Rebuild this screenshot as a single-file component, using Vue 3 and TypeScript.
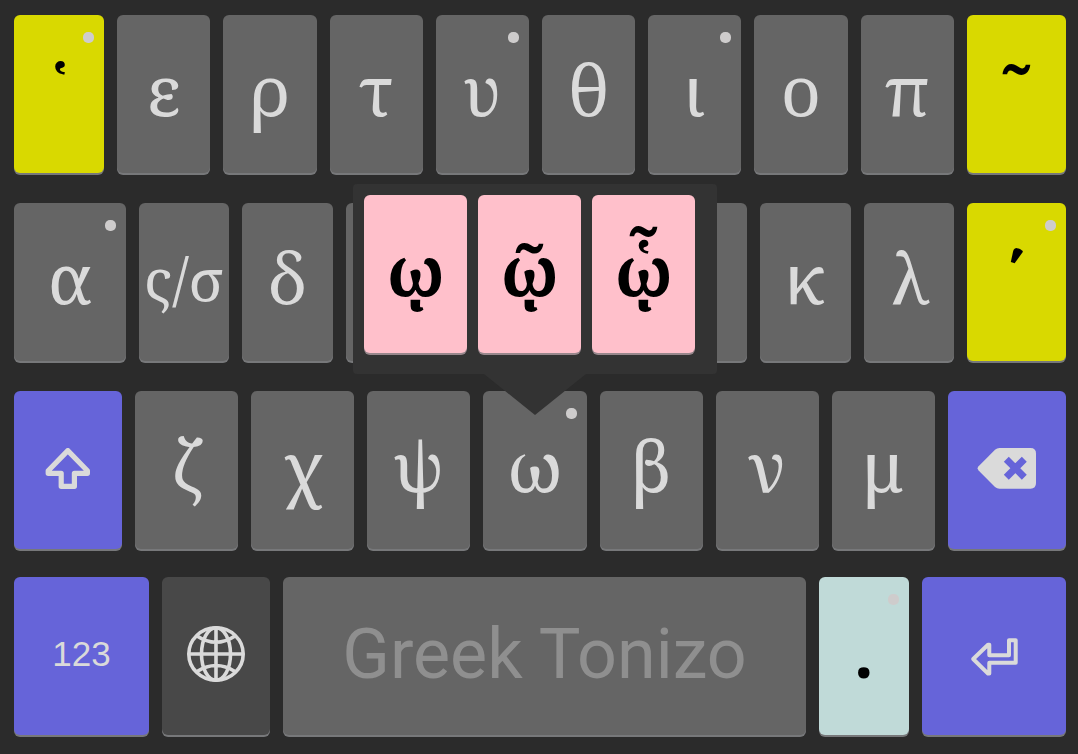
<script setup lang="ts">
type Tone = 'plain' | 'accent' | 'control' | 'dark' | 'mint'
type Icon = 'shift' | 'backspace' | 'globe' | 'enter'

interface Key {
  label?: string
  name?: string
  icon?: Icon
  weight: number
  tone?: Tone
  text?: 'pair' | 'digits' | 'space' | 'bold'
  more?: boolean
  popup?: string[]
}

const letterRows: Key[][] = [
  [
    { label: '῾', name: 'Rough breathing', weight: 90, tone: 'accent', text: 'bold', more: true },
    { label: 'ε', weight: 93 },
    { label: 'ρ', weight: 93 },
    { label: 'τ', weight: 93 },
    { label: 'υ', weight: 93, more: true },
    { label: 'θ', weight: 93 },
    { label: 'ι', weight: 93, more: true },
    { label: 'ο', weight: 93 },
    { label: 'π', weight: 93 },
    { label: '῀', name: 'Circumflex', weight: 99, tone: 'accent', text: 'bold' },
  ],
  [
    { label: 'α', weight: 112, more: true },
    { label: 'ς/σ', weight: 91, text: 'pair' },
    { label: 'δ', weight: 91 },
    { name: 'Phi', weight: 91 },
    { name: 'Gamma', weight: 91 },
    { name: 'Eta', weight: 91 },
    { name: 'Xi', weight: 91 },
    { label: 'κ', weight: 91 },
    { label: 'λ', weight: 91 },
    { label: '΄', name: 'Acute', weight: 99, tone: 'accent', text: 'bold', more: true },
  ],
  [
    { icon: 'shift', name: 'Shift', weight: 108, tone: 'control' },
    { label: 'ζ', weight: 103 },
    { label: 'χ', weight: 103 },
    { label: 'ψ', weight: 103 },
    { label: 'ω', weight: 103, more: true, popup: ['ῳ', 'ῷ', 'ᾧ'] },
    { label: 'β', weight: 103 },
    { label: 'ν', weight: 103 },
    { label: 'μ', weight: 103 },
    { icon: 'backspace', name: 'Backspace', weight: 118, tone: 'control' },
  ],
]

const bottomRow: Key[] = [
  { label: '123', weight: 135, tone: 'control', text: 'digits' },
  { icon: 'globe', name: 'Change keyboard', weight: 108, tone: 'dark' },
  { label: 'Greek Tonizo', weight: 522, text: 'space' },
  { label: '.', name: 'Full stop', weight: 90, tone: 'mint', text: 'bold', more: true },
  { icon: 'enter', name: 'Enter', weight: 144, tone: 'control' },
]

const blocks = [letterRows, [bottomRow]]
</script>

<template>
  <main class="keyboard">
    <section v-for="(block, b) in blocks" :key="b" class="block">
      <div v-for="(row, r) in block" :key="r" class="row">
        <div v-for="(key, k) in row" :key="k" class="slot" :style="{ flexGrow: key.weight }">
          <button type="button" class="key" :class="[key.tone, key.text]" :aria-label="key.name">
            <span v-if="key.label" class="glyph">{{ key.label }}</span>
            <svg v-else-if="key.icon === 'shift'" class="icon" width="48" height="44" viewBox="44 448 48 44">
              <path d="M67.8 450.6 48.2 470.8V473.3H61.2V486.3H74.4V473.3H87.4V470.8Z" fill="none" stroke="currentColor" stroke-width="5.2" stroke-linejoin="round" />
            </svg>
            <svg v-else-if="key.icon === 'backspace'" class="icon" width="60" height="44" viewBox="977 448 60 44">
              <path d="M978.6 466.2 995 449.8Q997 448 999.5 448H1030.5Q1036 448 1036 453.5V483Q1036 488.7 1030.5 488.7H999.5Q997 488.7 995 486.9L978.6 470.5Q976.7 468.3 978.6 466.2Z" fill="currentColor" />
              <path class="cross" d="M1006.3 459.2 1024.3 477.2M1024.3 459.2 1006.3 477.2" fill="none" stroke-width="7" />
            </svg>
            <svg v-else-if="key.icon === 'globe'" class="icon" width="60" height="60" viewBox="-30 -28 60 60">
              <g fill="none" stroke="currentColor" stroke-width="3.6">
                <ellipse rx="27.2" ry="26.2" />
                <ellipse rx="14.5" ry="26.2" />
                <path d="M0-26V26M-27 0H27M-19-18Q0-5.5 19-18M-19 17.5Q0 5.5 19 17.5" />
              </g>
            </svg>
            <svg v-else-if="key.icon === 'enter'" class="icon" width="50" height="42" viewBox="969 635 50 42">
              <path d="M973.2 659 988 644.8H989.3V655.3H1009V640.2H1015.7V662.8H989.3V673.6H988Z" fill="none" stroke="currentColor" stroke-width="4" stroke-linejoin="round" />
            </svg>
          </button>
          <div v-if="key.popup" class="popup">
            <button v-for="option in key.popup" :key="option" type="button" class="key option bold">
              <span class="glyph">{{ option }}</span>
            </button>
          </div>
          <span v-if="key.more" class="dot"></span>
        </div>
      </div>
    </section>
  </main>
</template>

<style>
body {
  margin: 0;
  background: #2b2b2b;
}
</style>

<style scoped>
.keyboard {
  display: flex;
  flex-direction: column;
  gap: 28px;
  box-sizing: border-box;
  min-height: 100vh;
  padding: 15px 12px 17px 14px;
  background: #2b2b2b;
}

.block {
  display: flex;
  flex-direction: column;
  gap: 30px;
}

.row {
  display: flex;
  gap: 13px;
}

.slot {
  position: relative;
  display: flex;
  flex-basis: 0;
  min-width: 0;
}

.key {
  display: flex;
  flex: 1;
  align-items: center;
  justify-content: center;
  min-width: 0;
  height: 158px;
  padding: 0;
  border: 0;
  border-radius: 6px;
  background: #656565;
  box-shadow: 0 2px 0 #77787a;
  color: #dadada;
  font-family: "Noto Serif", "Droid Serif", "DejaVu Serif Condensed", "DejaVu Serif", serif;
  font-size: 70px;
  line-height: 96px;
  white-space: nowrap;
}

.glyph {
  padding-bottom: 11px;
}

.accent {
  background: #d9d900;
}

.accent .glyph {
  padding-bottom: 8px;
}

.control {
  background: #6664d9;
}

.dark {
  background: #484848;
}

.mint {
  background: #c0dad8;
}

.bold {
  color: #000;
  font-weight: 700;
}

.pair {
  font-size: 58px;
}

.pair .glyph {
  padding-bottom: 6px;
}

.digits {
  font-family: "Liberation Sans", Arial, sans-serif;
  font-size: 35px;
}

.space {
  color: #8f8f8f;
  font-family: Roboto, sans-serif;
}

.digits .glyph,
.space .glyph {
  padding-bottom: 4px;
}

.icon {
  flex: none;
  display: block;
}

.cross {
  stroke: #6664d9;
}

.dot {
  position: absolute;
  top: 17px;
  right: 10px;
  z-index: 3;
  width: 11px;
  height: 11px;
  border-radius: 5px;
  background: #cecccc;
}

.popup {
  position: absolute;
  bottom: calc(100% + 17px);
  left: 50%;
  z-index: 2;
  display: flex;
  gap: 11px;
  padding: 11px 22px 21px 11px;
  border-radius: 4px;
  background: #333;
  transform: translateX(-50%);
}

.popup::after {
  position: absolute;
  top: 100%;
  left: 50%;
  width: 102px;
  height: 41px;
  background: #333;
  clip-path: polygon(0 0, 100% 0, 50% 100%);
  content: "";
  transform: translateX(-50%);
}

.option {
  flex: none;
  width: 103px;
  background: #ffc0cb;
  box-shadow: 0 2px 0 #98878c;
}
</style>
